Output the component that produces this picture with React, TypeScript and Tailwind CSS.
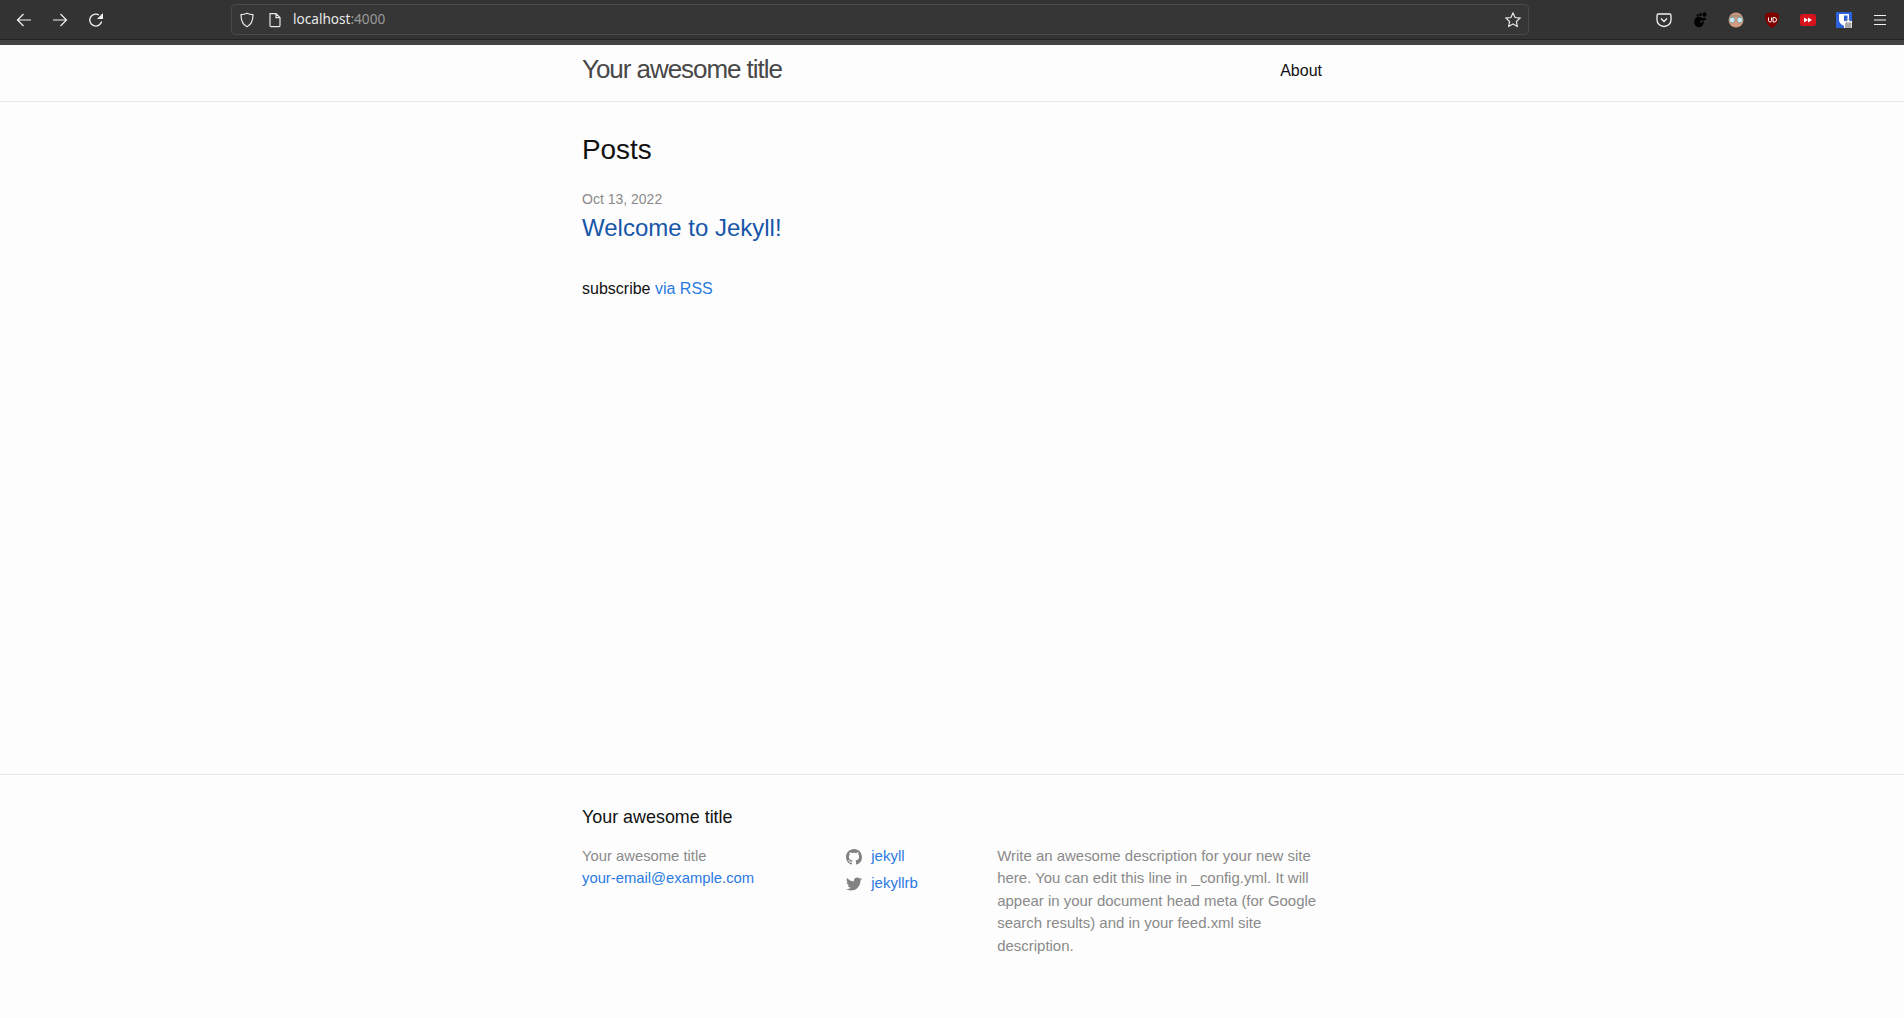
import { FaTwitter } from "react-icons/fa"

const GITHUB_PATH =
  "M8 0C3.58 0 0 3.58 0 8c0 3.54 2.29 6.53 5.47 7.59.4.07.55-.17.55-.38 0-.19-.01-.82-.01-1.49-2.01.37-2.53-.49-2.69-.94-.09-.23-.48-.94-.82-1.13-.28-.15-.68-.52-.01-.53.63-.01 1.08.58 1.23.82.72 1.21 1.87.87 2.33.66.07-.52.28-.87.51-1.07-1.78-.2-3.64-.89-3.64-3.95 0-.87.31-1.59.82-2.15-.08-.2-.36-1.02.08-2.12 0 0 .67-.21 2.2.82.64-.18 1.32-.27 2-.27.68 0 1.36.09 2 .27 1.53-1.04 2.2-.82 2.2-.82.44 1.1.16 1.92.08 2.12.51.56.82 1.27.82 2.15 0 3.07-1.87 3.75-3.65 3.95.29.25.54.73.54 1.48 0 1.07-.01 1.93-.01 2.2 0 .21.15.46.55.38A8.013 8.013 0 0016 8c0-4.42-3.58-8-8-8z"

const Slot = ({ children }: { children: React.ReactNode }) => (
  <div className="flex h-full w-9 shrink-0 items-center justify-center">{children}</div>
)

const Toolbar = () => (
  <div className="flex h-10 shrink-0 items-center border-b border-[#242424] bg-[#333333] px-[6px]">
    <Slot>
      <svg width="16" height="16" viewBox="0 0 16 16" fill="none" stroke="#f2f2f2" strokeWidth="1.2">
        <path d="M15 8H1.5M7.5 2L1.5 8l6 6" />
      </svg>
    </Slot>
    <Slot>
      <svg width="16" height="16" viewBox="0 0 16 16" fill="none" stroke="#f2f2f2" strokeWidth="1.2">
        <path d="M1 8h13.5M8.5 2l6 6-6 6" />
      </svg>
    </Slot>
    <Slot>
      <svg width="16" height="16" viewBox="0 0 16 16" fill="none">
        <path d="M13.6 9.5A6 6 0 1 1 11 3" stroke="#f2f2f2" strokeWidth="1.3" />
        <path d="M15 1v6H9z" fill="#f2f2f2" />
      </svg>
    </Slot>

    {/* адресная строка */}
    <div className="mx-[117px] flex h-[31px] flex-1 items-center rounded border border-[#4a4a4a] bg-[#363636] pl-[7px] pr-[7px]">
      <svg width="16" height="16" viewBox="0 0 16 16" fill="none" stroke="#e8e8e8" strokeWidth="1.2">
        <path d="M8 1.2c2 1 4 1.4 6 1.5 0 5-1 9.500-6 12-5-2.500-6-7-6-12 2-.1 4-.5 6-1.500z" />
      </svg>
      <svg className="ml-[12px]" width="16" height="16" viewBox="0 0 16 16" fill="none" stroke="#e8e8e8" strokeWidth="1.2">
        <path d="M3 1.600h6l4 4v8a1 1 0 0 1-1 1H4a1 1 0 0 1-1-1zM9 1.600v4h4" />
      </svg>
      <span className="mb-[2px] ml-[10px] font-['Noto_Sans',sans-serif] text-[13.600px] text-[#e8e8e8]">
        localhost<span className="text-[#9a9a9a]">:4000</span>
      </span>
      <svg className="ml-auto" width="16" height="16" viewBox="0 0 16 16" fill="none" stroke="#e8e8e8" strokeWidth="1.2">
        <path d="M8 1l2.100 4.500 4.900.6-3.600 3.400.9 4.900L8 12l-4.300 2.400.9-4.900L1 6.100l4.900-.6z" />
      </svg>
    </div>

    <Slot>
      <svg width="16" height="16" viewBox="0 0 16 16" fill="none" stroke="#f2f2f2" strokeWidth="1.3">
        <path d="M2.500 2h11A1.500 1.500 0 0 1 15 3.500V8A7 6.500 0 0 1 1 8V3.500A1.500 1.500 0 0 1 2.500 2z" />
        <path d="M5 6.500l3 3 3-3" />
      </svg>
    </Slot>
    <Slot>
      <svg width="16" height="16" viewBox="0 0 16 16" fill="#000000">
        <ellipse cx="7" cy="10" rx="4.800" ry="5.200" />
        <ellipse cx="12.500" cy="2.500" rx="2" ry="2.300" />
        <ellipse cx="8.500" cy="2.500" rx="1.300" ry="1.700" />
        <ellipse cx="5.600" cy="3.500" rx="1" ry="1.300" />
        <ellipse cx="12" cy="7" rx="2" ry="1.300" />
        <circle cx="9.500" cy="9.500" r="1.300" fill="#333333" />
      </svg>
    </Slot>
    <Slot>
      <svg width="16" height="16" viewBox="0 0 16 16">
        <circle cx="8" cy="8" r="7.500" fill="#d89a7c" />
        <path d="M1 6a7.500 6 0 0 1 14 0c-3-1.500-11-1.500-14 0z" fill="#a8947a" />
        <circle cx="4.200" cy="8" r="2.800" fill="#cfe6ee" stroke="#6f97a8" strokeWidth="0.8" />
        <circle cx="11.800" cy="8" r="2.800" fill="#cfe6ee" stroke="#6f97a8" strokeWidth="0.8" />
      </svg>
    </Slot>
    <Slot>
      <svg width="16" height="16" viewBox="0 0 16 16">
        <path d="M8 0l7 2c0 6-1 11-7 14C2 13 1 8 1 2z" fill="#800000" />
        <path d="M4.500 5.500v3a1.500 1.500 0 0 0 3 0v-3M9 5.500V10h1.300a2.250 2.250 0 0 0 0-4.500z" fill="none" stroke="#ffffff" strokeWidth="1" />
      </svg>
    </Slot>
    <Slot>
      <svg width="16" height="16" viewBox="0 0 16 16">
        <rect y="2" width="16" height="12" rx="3" fill="#d8121c" />
        <path d="M4 5.500L8 8l-4 2.500zM8 5.500L12 8l-4 2.500z" fill="#ffffff" />
      </svg>
    </Slot>
    <Slot>
      <svg width="16" height="16" viewBox="0 0 16 16">
        <rect width="16" height="16" fill="#2b62d9" />
        <path d="M3 2h10v6c0 3-3 5-5 6-2-1-5-3-5-6z" fill="#ffffff" />
        <path d="M8 3.500h3.500V8c0 2-2 3.500-3.500 4.300z" fill="#2b62d9" />
        <path d="M8 9h8v7H8z" fill="#ffffff" />
        <rect x="9" y="10.500" width="6.500" height="5.500" rx="1" fill="#a8a8a8" />
        <path d="M10.500 10.500V9a1.700 1.700 0 0 1 3.400 0v1.500" fill="none" stroke="#a8a8a8" />
      </svg>
    </Slot>
    <Slot>
      <svg width="16" height="16" viewBox="0 0 16 16" stroke="#f2f2f2" strokeWidth="1.200">
        <path d="M2 3.500h12M2 8h12M2 12.500h12" />
      </svg>
    </Slot>
  </div>
)

export default function App() {
  return (
    <div className="flex h-[1018px] flex-col overflow-hidden bg-[#fdfdfd] font-['Liberation_Sans',Arial,sans-serif] text-[16px] leading-[24px] text-[#111111]">
      <Toolbar />

      <header className="h-[62px] shrink-0 border-t-[5px] border-b border-t-[#424242] border-b-[#e8e8e8]">
        <div className="mx-auto flex w-[740px] items-start justify-between">
          <a className="text-[26px] leading-[48px] tracking-[-1.050px] text-[#484848]">Your awesome title</a>
          <a className="mt-[14px]">About</a>
        </div>
      </header>

      <main className="flex-1 py-[30px]">
        <div className="mx-auto w-[740px]">
          <h2 className="mb-[21px] text-[27.900px] leading-[36px]">Posts</h2>
          <div className="text-[14px] leading-[21px] text-[#8a8a8a]">Oct 13, 2022</div>
          <h3 className="text-[24px] leading-[36px] text-[#1756a9]">Welcome to Jekyll!</h3>
          <p className="mt-[31px]">
            subscribe <a className="text-[#2a7ae2]">via RSS</a>
          </p>
        </div>
      </main>

      <footer className="h-[244px] shrink-0 border-t border-[#e8e8e8] pt-[29px]">
        <div className="mx-auto w-[740px]">
          <h2 className="mb-[13.600px] text-[17.900px] leading-[27px]">Your awesome title</h2>
          <div className="flex text-[14.800px] leading-[22.500px] text-[#8a8a8a]">
            <div className="w-[264.250px] shrink-0">
              <div>Your awesome title</div>
              <a className="text-[#2a7ae2]">your-email@example.com</a>
            </div>
            <div className="w-[151px] shrink-0 text-[15px]">
              <div className="flex items-center">
                <svg className="mr-[9px] mt-[2px] h-4 w-4 fill-[#828282]" viewBox="0 0 16 16">
                  <path d={GITHUB_PATH} />
                </svg>
                <a className="text-[#2a7ae2]">jekyll</a>
              </div>
              <div className="mt-[4.500px] flex items-center">
                <FaTwitter className="mr-[9px] mt-[3px] h-4 w-4 text-[#828282]" />
                <a className="text-[#2a7ae2]">jekyllrb</a>
              </div>
            </div>
            <p className="w-[324.750px] shrink-0 text-[14.950px]">
              Write an awesome description for your new site here. You can edit this line in _config.yml. It will appear in your document head meta (for Google search results) and in your feed.xml site description.
            </p>
          </div>
        </div>
      </footer>
    </div>
  )
}
